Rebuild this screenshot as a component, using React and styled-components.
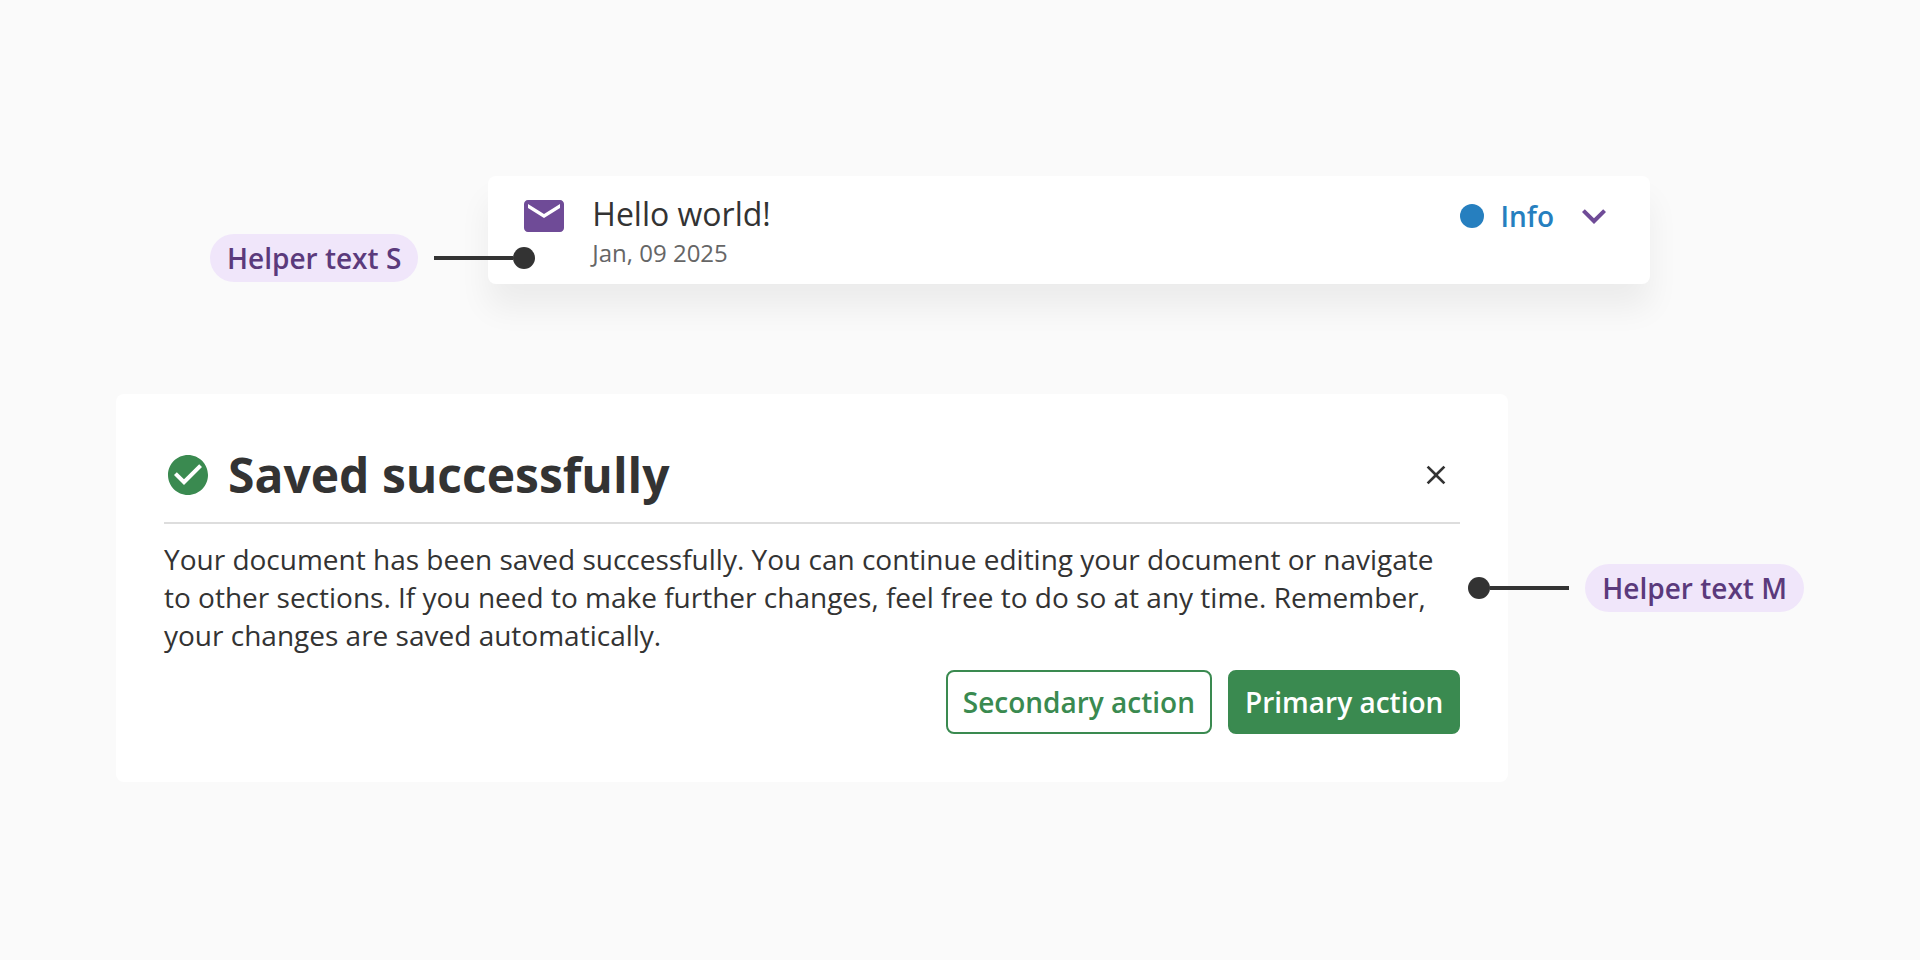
import React from "react";
import styled, { createGlobalStyle, css } from "styled-components";

const GlobalStyle = createGlobalStyle`
  *, *::before, *::after { box-sizing: border-box; }
  body {
    margin: 0;
    background: #fafafa;
    color: #333333;
    font-family: "Open Sans", sans-serif;
  }
  h1, h2, p { margin: 0; }
`;

const Page = styled.main`
  min-height: 100vh;
  padding: 176px 116px;
  display: flex;
  flex-direction: column;
  gap: 110px;
`;

const Example = styled.section`
  display: flex;
  align-items: ${(p) => p.$align || "center"};
  padding: ${(p) => p.$padding || "0"};
`;

const Annotation = styled.div`
  position: relative;
  z-index: 1;
  flex: none;
  display: flex;
  flex-direction: ${(p) => (p.$side === "right" ? "row-reverse" : "row")};
  align-items: center;
  gap: 16px;
  ${(p) =>
    p.$side === "right"
      ? css`margin-left: -40px;`
      : css`margin-right: -47px; padding-bottom: 2px;`}
`;

const Pill = styled.span`
  padding: 0 17px;
  border-radius: 24px;
  background: #f0e6fa;
  color: #5b3a7c;
  font-size: 28px;
  font-weight: 600;
  line-height: 48px;
  white-space: nowrap;
`;

const Pointer = styled.span`
  display: flex;
  flex-direction: ${(p) => (p.$side === "right" ? "row-reverse" : "row")};
  align-items: center;

  &::before {
    content: "";
    width: 79px;
    height: 4px;
    background: #333333;
  }
  &::after {
    content: "";
    width: 22px;
    height: 22px;
    border-radius: 50%;
    background: #333333;
  }
`;

const MessageCard = styled.article`
  flex: 1;
  display: flex;
  align-items: flex-start;
  gap: 24px;
  padding: 16px 32px 14px;
  border-radius: 8px;
  background: #ffffff;
  box-shadow: 0 24px 32px rgba(0, 0, 0, 0.06);
`;

const Icon = styled.svg`
  display: block;
  flex: none;
  width: ${(p) => p.$size || 48}px;
  height: ${(p) => p.$size || 48}px;
  fill: ${(p) => p.$color};
`;

const MessageText = styled.div`
  flex: 1;
`;

const MessageTitle = styled.h2`
  font-size: 32px;
  font-weight: 400;
  line-height: 44px;
`;

const MessageDate = styled.time`
  display: block;
  color: #666666;
  font-size: 24px;
  line-height: 34px;
`;

const Status = styled.div`
  display: flex;
  align-items: center;
  gap: 16px;
  color: #267fbf;
  font-size: 28px;
  font-weight: 600;
  line-height: 48px;
`;

const StatusDot = styled.span`
  width: 24px;
  height: 24px;
  border-radius: 50%;
  background: #267fbf;
`;

const IconButton = styled.button`
  display: flex;
  align-items: center;
  justify-content: center;
  width: 48px;
  height: 48px;
  padding: 0;
  border: 0;
  background: none;
  cursor: pointer;
`;

const Dialog = styled.article`
  flex: 1;
  display: flex;
  flex-direction: column;
  gap: 16px;
  padding: 48px;
  border-radius: 8px;
  background: #ffffff;
`;

const DialogHeader = styled.header`
  display: flex;
  align-items: center;
  gap: 16px;
  padding-bottom: 14px;
  border-bottom: 2px solid #dddddd;
`;

const DialogTitle = styled.h1`
  flex: 1;
  font-size: 48px;
  font-weight: 700;
  line-height: 66px;
`;

const DialogBody = styled.p`
  font-size: 28px;
  line-height: 38px;
`;

const Actions = styled.footer`
  display: flex;
  justify-content: flex-end;
  gap: 16px;
`;

const Button = styled.button`
  height: 64px;
  padding: 0 15px;
  border: 2px solid #3a8a50;
  border-radius: 8px;
  background: ${(p) => (p.$primary ? "#3a8a50" : "#ffffff")};
  color: ${(p) => (p.$primary ? "#ffffff" : "#3a8a50")};
  font-family: inherit;
  font-size: 28px;
  font-weight: 600;
  cursor: pointer;
`;

function Helper({ side, children }) {
  return (
    <Annotation $side={side}>
      <Pill>{children}</Pill>
      <Pointer $side={side} />
    </Annotation>
  );
}

export default function App() {
  return (
    <>
      <GlobalStyle />
      <Page>
        <Example $align="flex-end" $padding="0 154px 0 94px">
          <Helper side="left">Helper text S</Helper>
          <MessageCard>
            <Icon $color="#6f4b97" viewBox="0 0 24 24" aria-hidden="true">
              <path d="M20 4H4c-1.1 0-1.99.9-1.99 2L2 18c0 1.1.9 2 2 2h16c1.1 0 2-.9 2-2V6c0-1.1-.9-2-2-2zm0 4l-8 5-8-5V6l8 5 8-5v2z" />
            </Icon>
            <MessageText>
              <MessageTitle>Hello world!</MessageTitle>
              <MessageDate dateTime="2025-01-09">Jan, 09 2025</MessageDate>
            </MessageText>
            <Status>
              <StatusDot />
              <span>Info</span>
              <IconButton type="button" aria-label="Expand message">
                <Icon $color="#6f4b97" viewBox="0 0 24 24" aria-hidden="true">
                  <path d="M7.41 8.59L12 13.17l4.59-4.58L18 10l-6 6-6-6 1.41-1.41z" />
                </Icon>
              </IconButton>
            </Status>
          </MessageCard>
        </Example>

        <Example>
          <Dialog>
            <DialogHeader>
              <Icon $color="#3a8a50" viewBox="0 0 24 24" aria-hidden="true">
                <path d="M12 2C6.48 2 2 6.48 2 12s4.48 10 10 10 10-4.48 10-10S17.52 2 12 2zm-2 15l-5-5 1.41-1.41L10 14.17l7.59-7.59L19 8l-9 9z" />
              </Icon>
              <DialogTitle>Saved successfully</DialogTitle>
              <IconButton type="button" aria-label="Close">
                <Icon $size={32} $color="#333333" viewBox="0 0 24 24" aria-hidden="true">
                  <path d="M19 6.41L17.59 5 12 10.59 6.41 5 5 6.41 10.59 12 5 17.59 6.41 19 12 13.41 17.59 19 19 17.59 13.41 12z" />
                </Icon>
              </IconButton>
            </DialogHeader>
            <DialogBody>
              Your document has been saved successfully. You can continue editing your document or
              navigate to other sections. If you need to make further changes, feel free to do so at
              any time. Remember, your changes are saved automatically.
            </DialogBody>
            <Actions>
              <Button type="button">Secondary action</Button>
              <Button type="button" $primary>
                Primary action
              </Button>
            </Actions>
          </Dialog>
          <Helper side="right">Helper text M</Helper>
        </Example>
      </Page>
    </>
  );
}
